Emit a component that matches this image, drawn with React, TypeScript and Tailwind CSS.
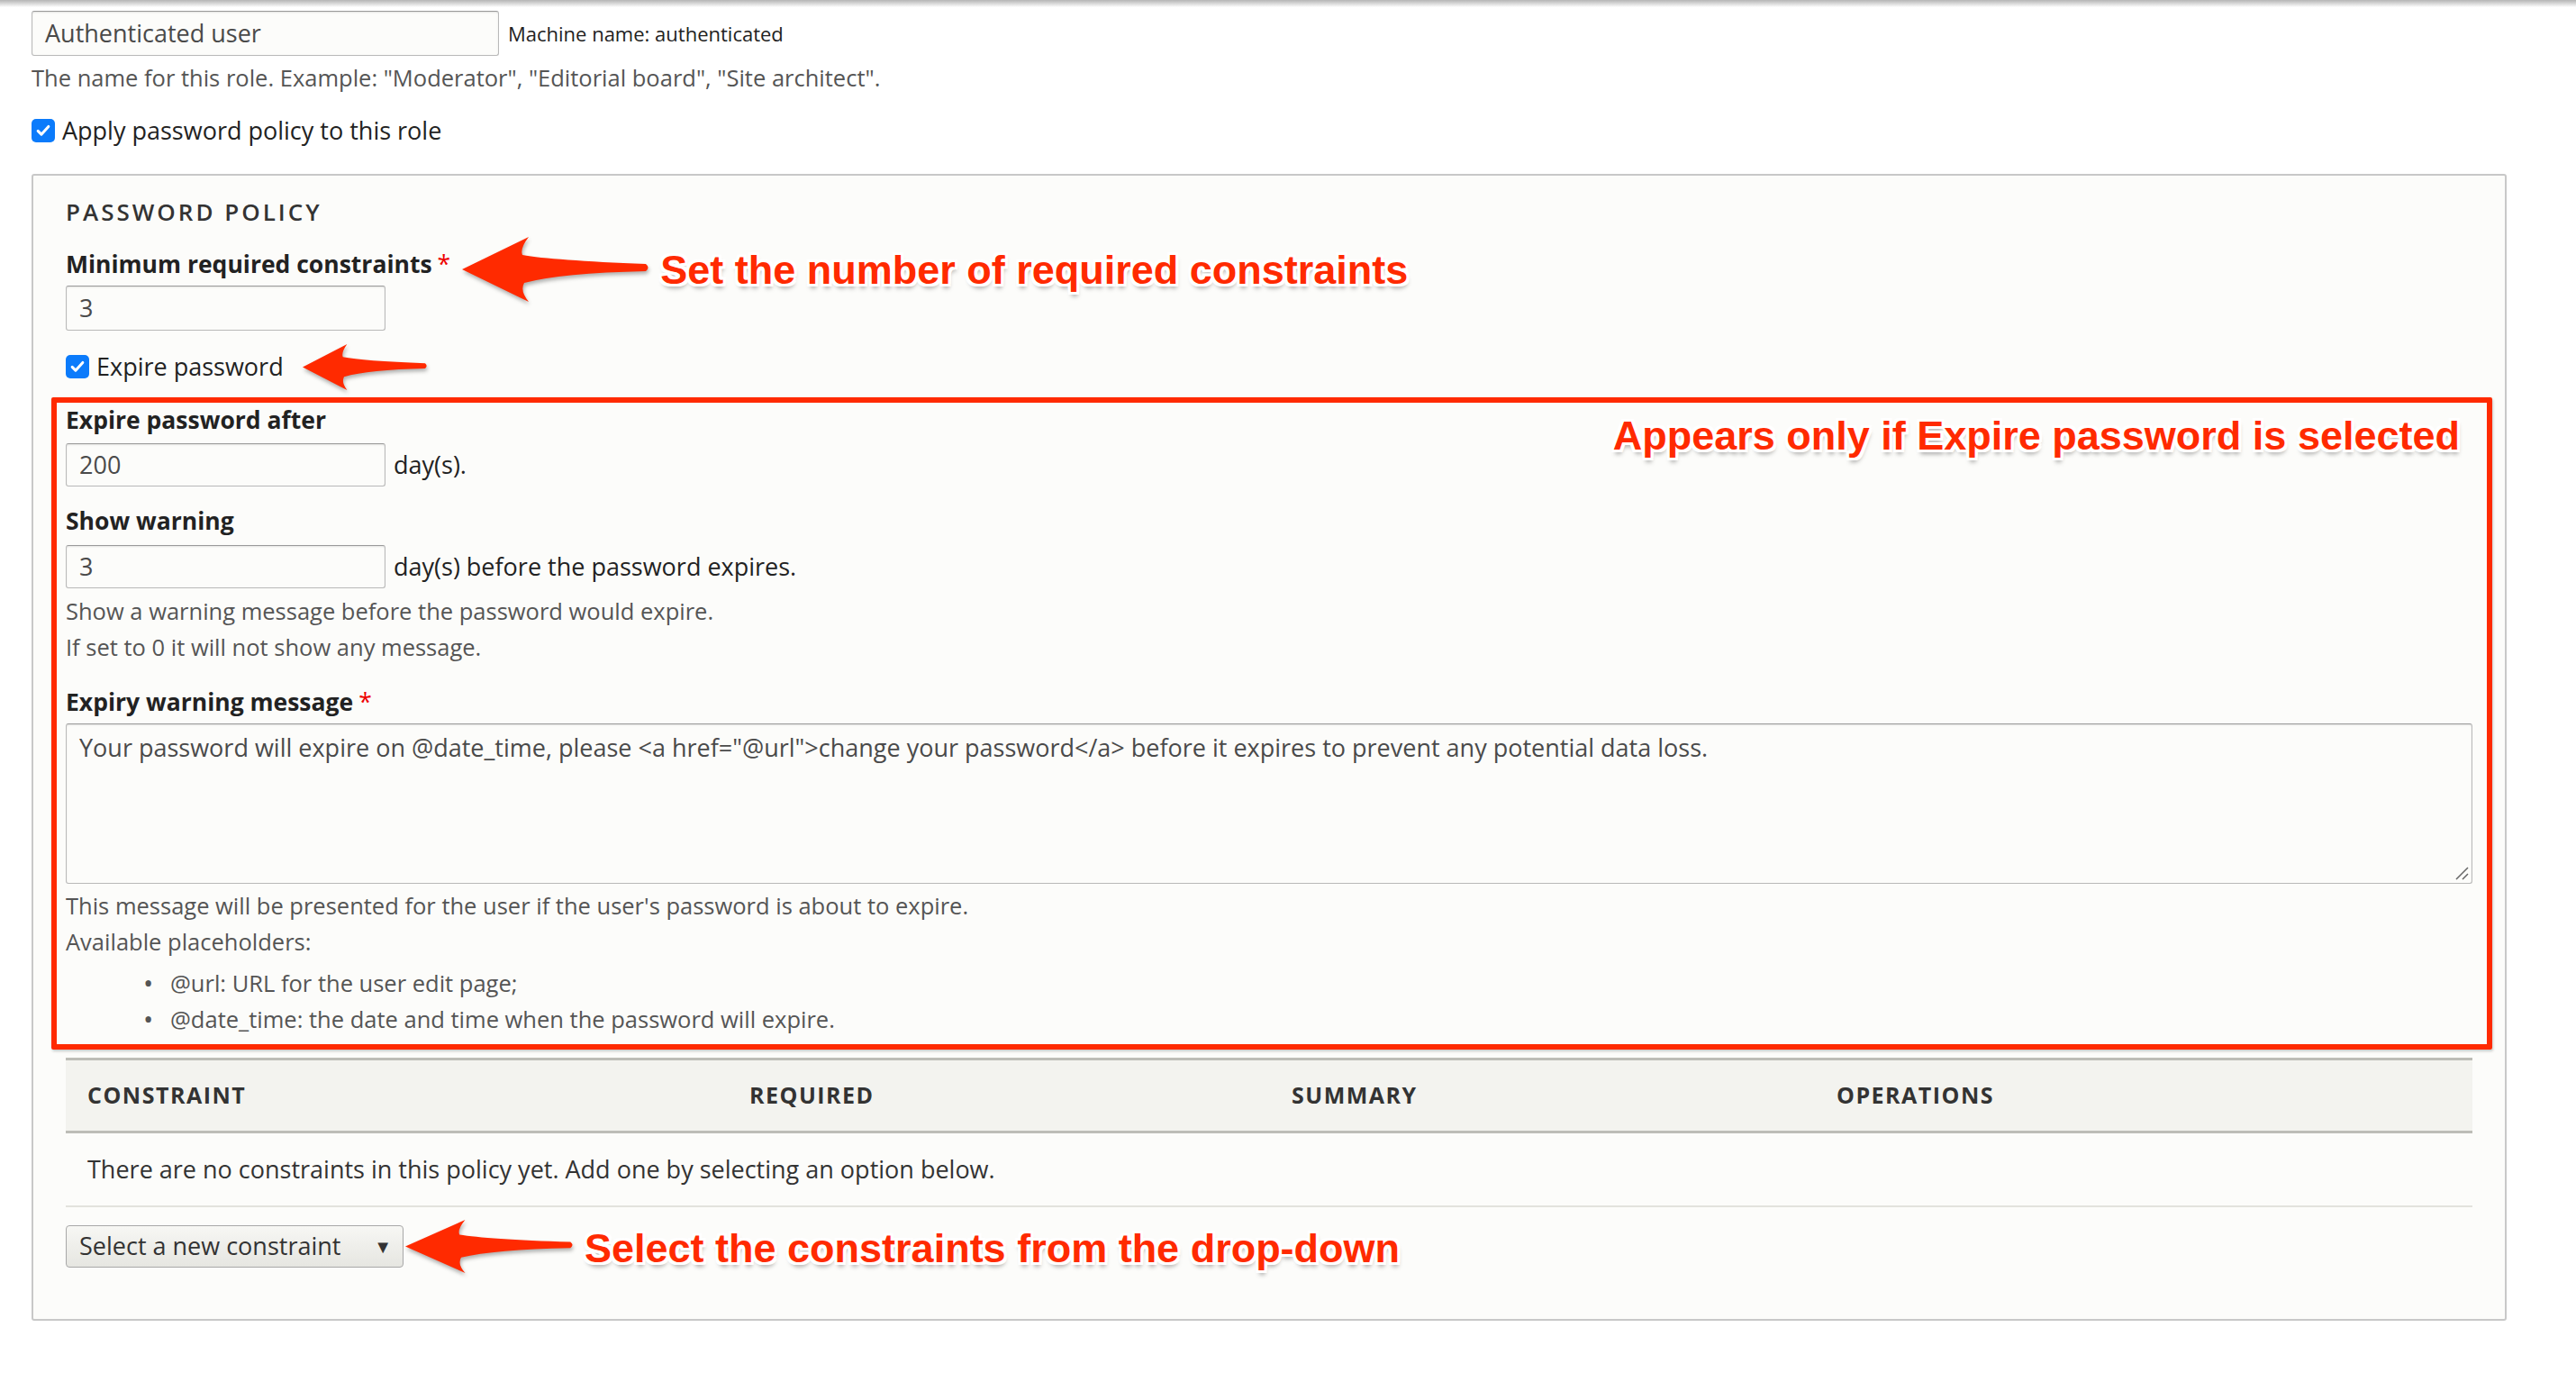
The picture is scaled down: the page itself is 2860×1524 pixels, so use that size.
import type { ReactNode } from 'react';

const RED = '#ff2a00';

const calloutText =
  "font-['Liberation_Sans',Arial,sans-serif] font-bold text-[45px] leading-none text-[#ff2a00] whitespace-nowrap [text-shadow:-3px_-3px_0_#fff,3px_-3px_0_#fff,-3px_3px_0_#fff,3px_3px_0_#fff,0_-3px_0_#fff,0_3px_0_#fff,-3px_0_0_#fff,3px_0_0_#fff,1px_5px_5px_rgba(0,0,0,0.35)]";

// hand drawn skitch style arrow, tip on the left
function Arrow({ className }: { className?: string }) {
  return (
    <svg
      viewBox="0 0 207 72"
      preserveAspectRatio="none"
      className={`shrink-0 drop-shadow-[1px_3px_2px_rgba(0,0,0,0.3)] ${className ?? ''}`}
    >
      <path
        d="M0 36 L74 0 Q64 13 67 20 Q100 26 204 30 Q209 34 204 38 Q110 40 69 51 Q64 60 74 72 Z"
        fill={RED}
      />
    </svg>
  );
}

function Checkbox() {
  return (
    <span className="w-[26px] h-[26px] rounded-[5px] bg-[#0b7bfb] flex items-center justify-center shrink-0">
      <svg viewBox="0 0 24 24" className="w-[20px] h-[20px]">
        <path d="M5 12.5l4.5 4.5L19 6.5" stroke="#fff" strokeWidth="3.6" fill="none" strokeLinecap="round" strokeLinejoin="round" />
      </svg>
    </span>
  );
}

function TextBox({ value, className }: { value: string; className?: string }) {
  return (
    <div
      className={`flex items-center px-[14px] bg-[#fcfcfa] border border-[#b9b9b9] border-t-[#9a9a9a] rounded-[3px] shadow-[inset_0_1px_2px_rgba(0,0,0,0.1)] text-[#4a4a4a] shrink-0 ${className ?? ''}`}
    >
      {value}
    </div>
  );
}

function Label({ children, required }: { children: ReactNode; required?: boolean }) {
  return (
    <span className="font-bold text-[26.5px] text-[#222] whitespace-nowrap">
      {children}
      {required && <span className="ml-[6px] text-[#e00] font-normal">*</span>}
    </span>
  );
}

export default function App() {
  return (
    <div className="w-[2860px] h-[1524px] bg-white text-[#333] font-['Open_Sans',sans-serif] text-[27px] overflow-hidden">
      <div className="h-[8px] bg-linear-to-b from-[#b5b5b5] to-white" />

      <div className="pl-[35px]">
        {/* Role name */}
        <div className="mt-[4px] flex items-center">
          <TextBox value="Authenticated user" className="w-[519px] h-[50px]" />
          <span className="ml-[10px] text-[22px] text-[#222]">Machine name: authenticated</span>
        </div>
        <div className="mt-[9px] leading-[30px] text-[25.5px] text-[#555]">
          The name for this role. Example: "Moderator", "Editorial board", "Site architect".
        </div>
        <div className="mt-[29px] h-[30px] flex items-center gap-[8px]">
          <Checkbox />
          <span className="text-[#222]">Apply password policy to this role</span>
        </div>

        {/* Password policy fieldset */}
        <div className="mt-[33px] w-[2748px] border-2 border-[#c8c8c8] bg-[#fcfcfa] rounded-[3px] px-[36px] pt-[25px] pb-[57px]">
          <div className="h-[30px] leading-[30px] text-[26px] font-semibold tracking-[3px] uppercase text-[#333]">
            Password policy
          </div>

          <div className="mt-[29px] h-[30px] flex items-center">
            <Label required>Minimum required constraints</Label>
            <Arrow className="ml-[13px] mt-[10px] w-[207px] h-[72px]" />
            <span className={`ml-[13px] mt-[10px] ${calloutText}`}>Set the number of required constraints</span>
          </div>
          <TextBox value="3" className="mt-[8px] w-[355px] h-[50px]" />

          <div className="mt-[25px] h-[30px] flex items-center">
            <Checkbox />
            <span className="ml-[8px] text-[#222]">Expire password</span>
            <Arrow className="ml-[21px] w-[138px] h-[51px]" />
          </div>

          {/* Conditional block */}
          <div className="relative mt-[30px]">
            <div className="h-[30px] flex items-center justify-between">
              <Label>Expire password after</Label>
              <span className={`mr-[14px] translate-y-[16px] ${calloutText}`}>
                Appears only if Expire password is selected
              </span>
            </div>
            <div className="mt-[10px] flex items-center">
              <TextBox value="200" className="w-[355px] h-[48px]" />
              <span className="ml-[9px] text-[#222]">day(s).</span>
            </div>

            <div className="mt-[24px] h-[30px] flex items-center">
              <Label>Show warning</Label>
            </div>
            <div className="mt-[11px] flex items-center">
              <TextBox value="3" className="w-[355px] h-[48px]" />
              <span className="ml-[9px] text-[#222]">day(s) before the password expires.</span>
            </div>
            <div className="mt-[5px] leading-[40px] text-[25.5px] text-[#555]">
              <div>Show a warning message before the password would expire.</div>
              <div>If set to 0 it will not show any message.</div>
            </div>

            <div className="mt-[27px] h-[30px] flex items-center">
              <Label required>Expiry warning message</Label>
            </div>
            <div className="relative mt-[8px] h-[178px] bg-[#fcfcfa] border border-[#b9b9b9] border-t-[#9a9a9a] rounded-[3px] shadow-[inset_0_1px_2px_rgba(0,0,0,0.1)] px-[14px] pt-[11px] leading-[30px] text-[#4a4a4a]">
              Your password will expire on @date_time, please &lt;a href="@url"&gt;change your password&lt;/a&gt; before it expires to prevent any potential data loss.
              <svg viewBox="0 0 16 16" className="absolute right-[3px] bottom-[3px] w-[16px] h-[16px]">
                <path d="M15 2L2 15M15 9L9 15" stroke="#666" strokeWidth="1.5" />
              </svg>
            </div>
            <div className="mt-[4px] leading-[40px] text-[25.5px] text-[#555]">
              <div>This message will be presented for the user if the user's password is about to expire.</div>
              <div>Available placeholders:</div>
            </div>
            <ul className="mt-[6px] leading-[40px] text-[25.5px] text-[#555]">
              <li className="flex pl-[86px]">
                <span className="w-[30px] text-[30px]">•</span>
                <span>@url: URL for the user edit page;</span>
              </li>
              <li className="flex pl-[86px]">
                <span className="w-[30px] text-[30px]">•</span>
                <span>@date_time: the date and time when the password will expire.</span>
              </li>
            </ul>

            {/* highlight box */}
            <div className="absolute -left-[16px] -right-[22px] -top-[11px] -bottom-[14px] border-[6px] border-[#ff2a00] rounded-[2px] pointer-events-none shadow-[1px_2px_3px_rgba(0,0,0,0.2)]" />
          </div>

          {/* Constraints table */}
          <div className="mt-[23px]">
            <div className="h-[84px] grid grid-cols-[735px_602px_605px_1fr] items-center pl-[24px] bg-[#f3f3ef] border-y-[3px] border-[#bdbdb7] text-[25px] font-bold uppercase tracking-[1.5px] text-[#333]">
              <span>Constraint</span>
              <span>Required</span>
              <span>Summary</span>
              <span>Operations</span>
            </div>
            <div className="h-[82px] flex items-center pl-[24px] border-b-2 border-[#e3e3dd] text-[#333]">
              There are no constraints in this policy yet. Add one by selecting an option below.
            </div>
          </div>

          <div className="mt-[20px] h-[47px] flex items-center">
            <div className="w-[375px] h-[47px] flex items-center justify-between pl-[14px] pr-[12px] rounded-[4px] border border-[#a8a8a8] bg-linear-to-b from-[#f7f7f4] to-[#e6e6e1] text-[#333] shrink-0">
              <span>Select a new constraint</span>
              <span className="text-[20px] text-[#333]">▼</span>
            </div>
            <Arrow className="ml-[2px] w-[186px] h-[59px]" />
            <span className={`ml-[13px] mt-[4px] ${calloutText}`}>Select the constraints from the drop-down</span>
          </div>
        </div>
      </div>
    </div>
  );
}
